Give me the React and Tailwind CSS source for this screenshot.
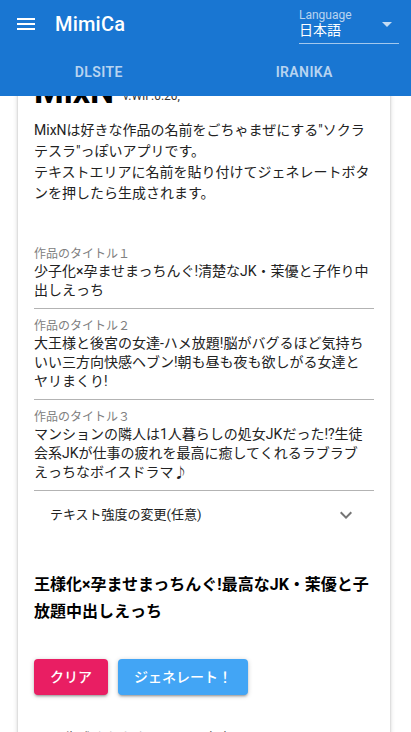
import React from "react";

const FONT = "font-[Roboto,'Noto_Sans_CJK_JP',sans-serif]";

function MenuIcon() {
  return (
    <svg viewBox="0 0 24 24" className="w-6 h-6" fill="currentColor">
      <path d="M3 18h18v-2H3v2zm0-5h18v-2H3v2zm0-7v2h18V6H3z" />
    </svg>
  );
}

function ExpandMore() {
  return (
    <svg viewBox="0 0 24 24" className="w-6 h-6" fill="#757575">
      <path d="M16.59 8.59L12 13.17 7.41 8.59 6 10l6 6 6-6z" />
    </svg>
  );
}

function TitleField({ label, children }) {
  return (
    <div className="pt-[9px] pb-[8px] border-b border-[#b3b3b3]">
      <div className="text-[12px] leading-4 text-[#808080]">{label}</div>
      <div className="pr-[2px] text-sm leading-[19px] text-[#222]">{children}</div>
    </div>
  );
}

export default function App() {
  return (
    <div className={`${FONT} w-[411px] h-[732px] overflow-hidden bg-white flex flex-col`}>
      {/* app bar */}
      <header className="relative z-10 bg-[#1976d2] text-white shrink-0">
        <div className="h-12 flex items-center pl-[14px] pr-3">
          <MenuIcon />
          <div className="ml-[17px] text-[20px] font-medium tracking-[0.2px]">MimiCa</div>
          <div className="ml-auto self-start relative w-[100px] pt-[9px] pb-[3px] border-b border-[rgba(255,255,255,0.6)]">
            <div className="text-[12px] leading-3 text-[rgba(255,255,255,0.7)]">Language</div>
            <div className="text-sm leading-[19px] text-white">日本語</div>
            <svg viewBox="0 0 24 24" className="absolute right-0 top-3 w-6 h-6" fill="rgba(255,255,255,0.75)">
              <path d="M7 10l5 5 5-5z" />
            </svg>
          </div>
        </div>
        <nav className="h-12 flex">
          <div className="flex-1 flex items-center justify-center text-sm font-semibold uppercase tracking-[0.4px] text-[rgba(255,255,255,0.7)] pr-2">
            DLsite
          </div>
          <div className="flex-1 flex items-center justify-center text-sm font-semibold uppercase tracking-[0.4px] text-[rgba(255,255,255,0.7)] pr-2">
            Iranika
          </div>
        </nav>
      </header>

      {/* scrolled page body */}
      <main className="flex-1 overflow-hidden">
        <div className="-mt-[42px]">
          <section className="ml-[18px] w-[372px] bg-white px-4 pt-4 pb-8 shadow-[0_1px_5px_0_rgba(0,0,0,0.2),0_2px_2px_0_rgba(0,0,0,0.14),0_3px_1px_-2px_rgba(0,0,0,0.12)]">
            <div className="flex items-baseline">
              <h1 className="text-[34px] leading-[42px] font-bold text-black">MixN</h1>
              <span className="ml-[9px] text-[12px] text-[#333] -translate-y-[3px]">v.WIP.0.20,</span>
            </div>

            <p className="mt-2 text-sm leading-[21px] text-[#222]">
              MixNは好きな作品の名前をごちゃまぜにする"ソクラテスラ"っぽいアプリです。
              <br />
              テキストエリアに名前を貼り付けてジェネレートボタンを押したら生成されます。
            </p>

            <div className="mt-[33px]">
              <TitleField label="作品のタイトル１">
                少子化×孕ませまっちんぐ!清楚なJK・茉優と子作り中出しえっち
              </TitleField>
              <TitleField label="作品のタイトル２">
                大王様と後宮の女達-ハメ放題!脳がバグるほど気持ちいい三方向快感ヘブン!朝も昼も夜も欲しがる女達とヤリまくり!
              </TitleField>
              <TitleField label="作品のタイトル３">
                マンションの隣人は1人暮らしの処女JKだった!?生徒会系JKが仕事の疲れを最高に癒してくれるラブラブ
                <span className="whitespace-nowrap">えっち</span>なボイスドラマ♪
              </TitleField>
            </div>

            {/* optional settings accordion */}
            <div className="h-12 flex items-center justify-between px-4">
              <span className="text-[13px] text-[#222]">テキスト強度の変更(任意)</span>
              <ExpandMore />
            </div>

            <div className="mt-8 text-base leading-[27px] font-bold text-black">
              王様化×孕ませまっちんぐ!最高なJK・茉優と子放題中出しえっち
            </div>

            <div className="mt-[34px] flex gap-[10px]">
              <button className="h-9 px-4 rounded bg-[#e91e63] text-white text-sm font-medium shadow-[0_1px_5px_0_rgba(0,0,0,0.2),0_2px_2px_0_rgba(0,0,0,0.14),0_3px_1px_-2px_rgba(0,0,0,0.12)]">
                クリア
              </button>
              <button className="h-9 px-4 rounded bg-[#42a5f5] text-white text-sm font-medium shadow-[0_1px_5px_0_rgba(0,0,0,0.2),0_2px_2px_0_rgba(0,0,0,0.14),0_3px_1px_-2px_rgba(0,0,0,0.12)]">
                ジェネレート！
              </button>
            </div>

            <p className="mt-[33px] text-sm leading-[21px] text-center text-[#555]">
              生成されたタイトルは自由にシェアできます
            </p>
          </section>
        </div>
      </main>
    </div>
  );
}
